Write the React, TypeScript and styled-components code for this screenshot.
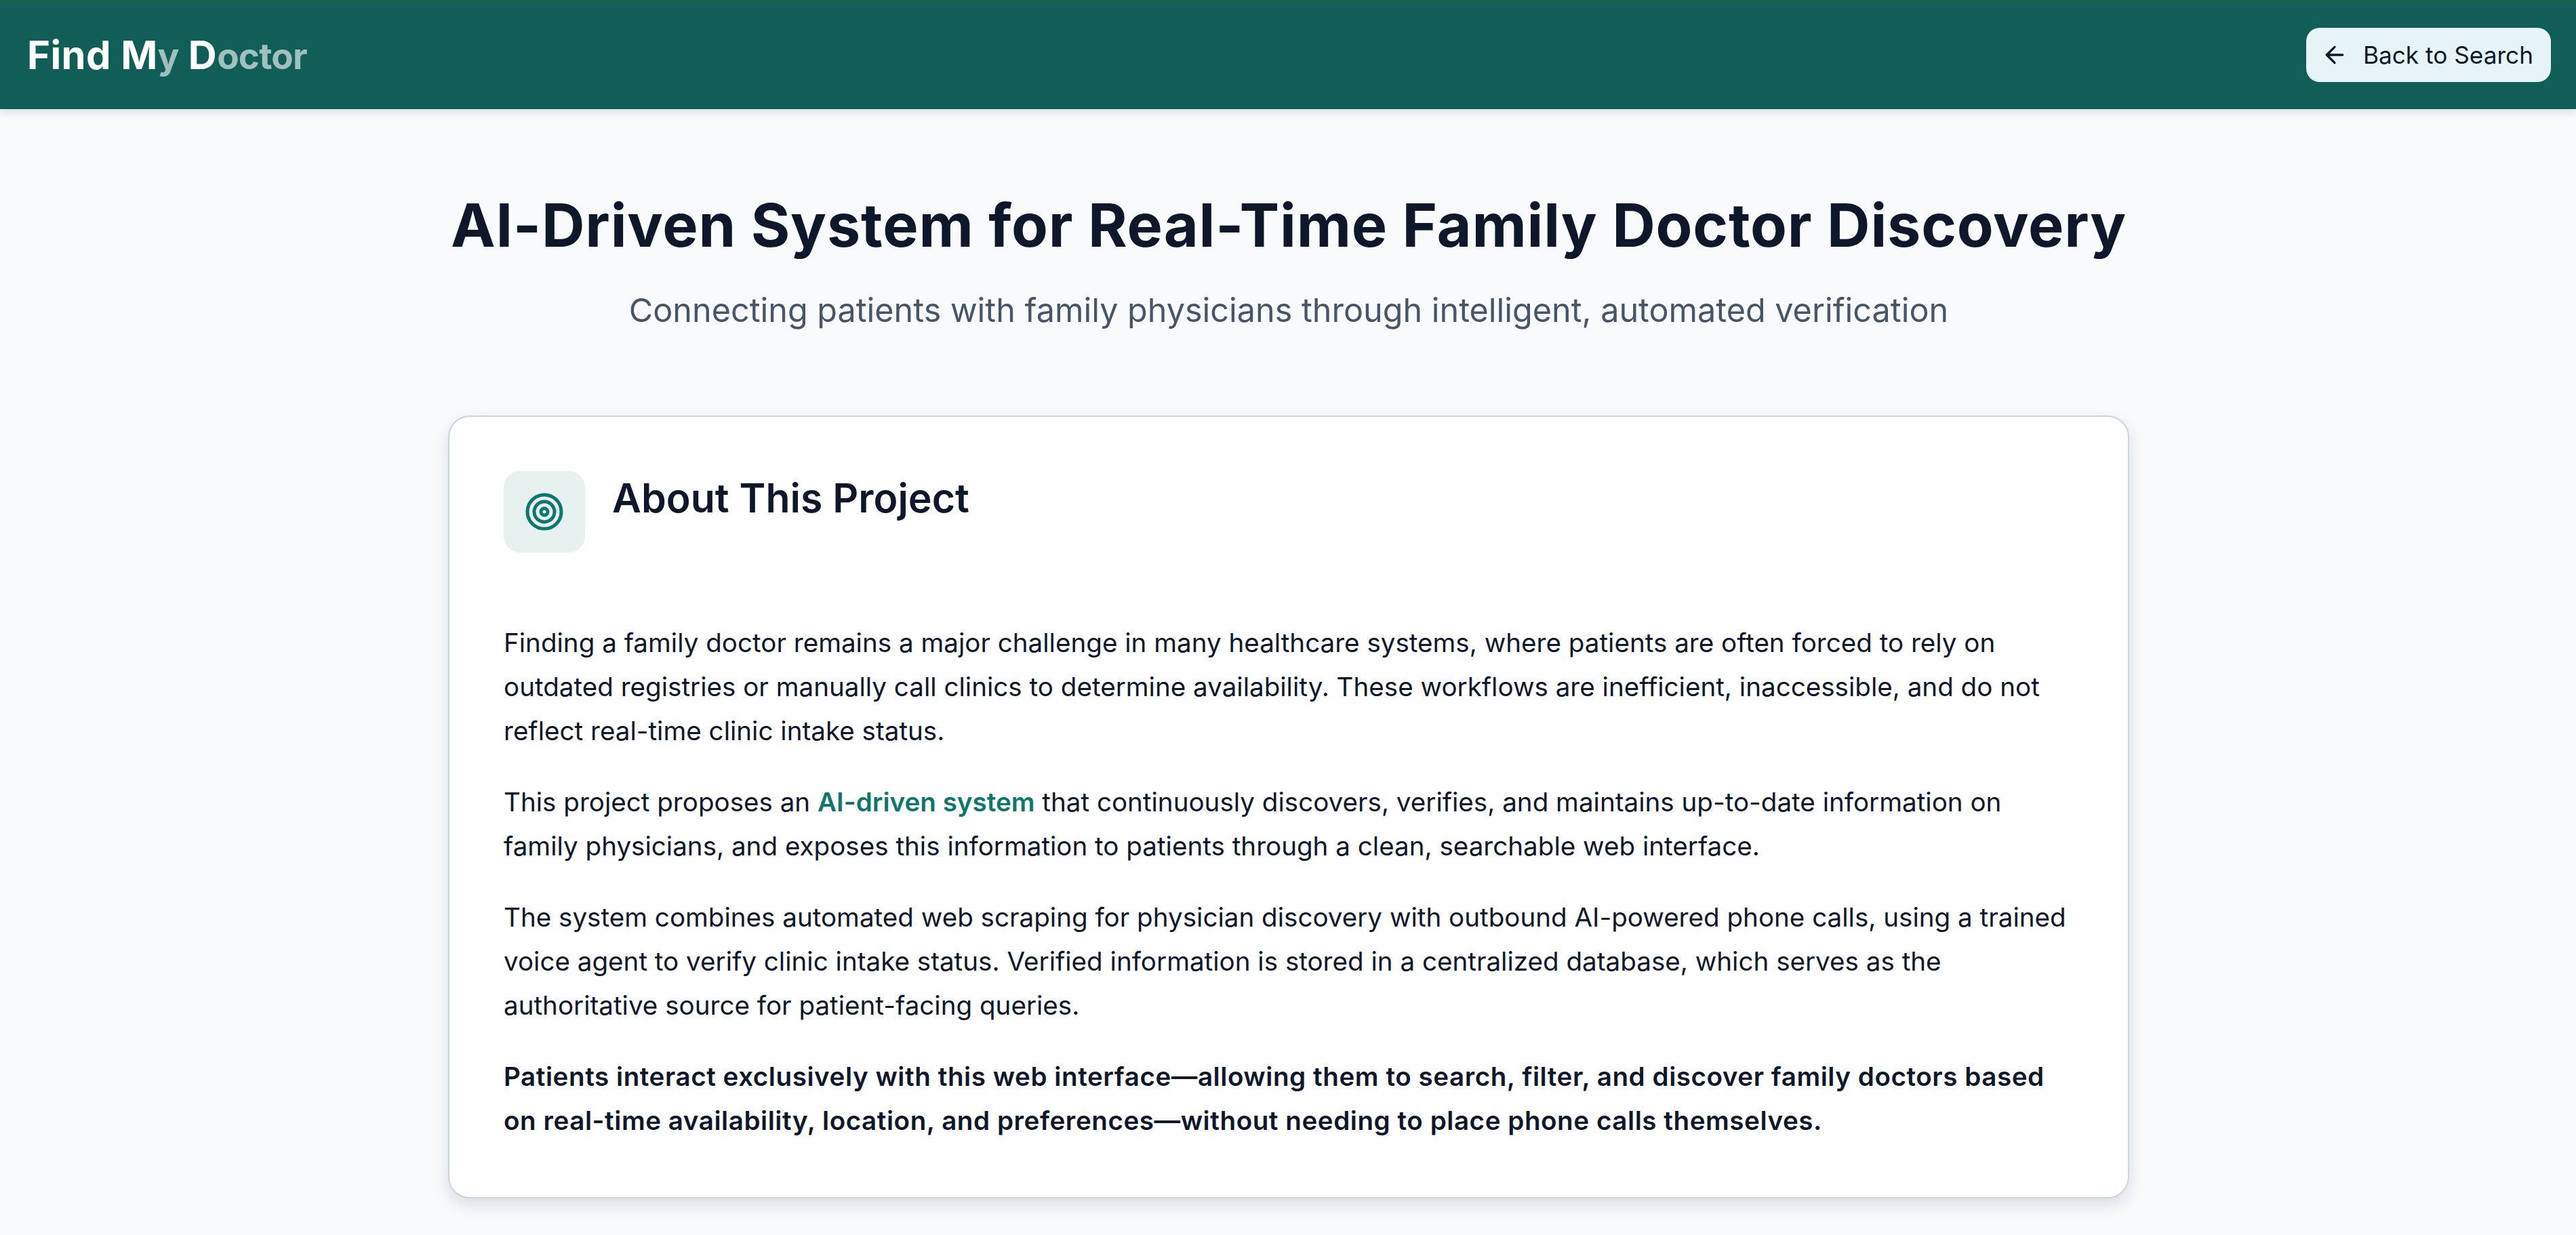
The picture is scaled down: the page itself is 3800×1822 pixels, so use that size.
import React from 'react';
import styled, { createGlobalStyle } from 'styled-components';
import { ArrowLeft, Target } from 'lucide-react';

const GlobalStyle = createGlobalStyle`
  html, body {
    margin: 0;
    padding: 0;
    background: #f8fafc;
    font-family: Inter, "Liberation Sans", sans-serif;
  }
  * {
    box-sizing: border-box;
  }
`;

const App = () => {
  return (
    <Page>
      <GlobalStyle />
      <Header>
        <Logo>
          Find M<Faded>y</Faded> D<Faded>octor</Faded>
        </Logo>
        <BackButton>
          <ArrowLeft size={40} strokeWidth={2} />
          Back to Search
        </BackButton>
      </Header>
      <Main>
        <Title>AI-Driven System for Real-Time Family Doctor Discovery</Title>
        <Subtitle>Connecting patients with family physicians through intelligent, automated verification</Subtitle>
        <Card>
          <CardHead>
            <IconBox>
              <Target size={60} strokeWidth={2} />
            </IconBox>
            <CardTitle>About This Project</CardTitle>
          </CardHead>
          <Paragraph>
            Finding a family doctor remains a major challenge in many healthcare systems, where patients are often forced to rely on outdated registries or manually call clinics to determine availability. These workflows are inefficient, inaccessible, and do not reflect real-time clinic intake status.
          </Paragraph>
          <Paragraph>
            This project proposes an <Accent>AI-driven system</Accent> that continuously discovers, verifies, and maintains up-to-date information on family physicians, and exposes this information to patients through a clean, searchable web interface.
          </Paragraph>
          <Paragraph>
            The system combines automated web scraping for physician discovery with outbound AI-powered phone calls, using a trained voice agent to verify clinic intake status. Verified information is stored in a centralized database, which serves as the authoritative source for patient-facing queries.
          </Paragraph>
          <Paragraph $strong>
            Patients interact exclusively with this web interface—allowing them to search, filter, and discover family doctors based on real-time availability, location, and preferences—without needing to place phone calls themselves.
          </Paragraph>
        </Card>
      </Main>
    </Page>
  );
};

const Page = styled.div`
  min-height: 1822px;
  background: #f8fafc;
  color: #0f172a;
`;
const Header = styled.header`
  height: 161px;
  background: #115e59;
  border-top: 1px solid #2d5a2a;
  box-shadow: 0 5px 12px rgba(15, 23, 42, 0.12);
  padding: 0 37px 0 40px;
  display: flex;
  align-items: center;
  justify-content: space-between;
`;
const Logo = styled.div`
  color: #ffffff;
  font-size: 58px;
  font-weight: 700;
  letter-spacing: 0.4px;
`;
const Faded = styled.span`
  color: #a0c0bd;
  font-size: 53px;
  letter-spacing: -0.8px;
`;
const BackButton = styled.button`
  height: 80px;
  padding: 0 26px 0 22px;
  border: none;
  border-radius: 20px;
  background: #e6f4f8;
  color: #0f172a;
  font-family: inherit;
  font-size: 35.2px;
  font-weight: 400;
  display: flex;
  align-items: center;
  gap: 22px;
`;
const Main = styled.main`
  width: 2480px;
  margin-left: 661px;
  padding-top: 111px;
`;
const Title = styled.h1`
  margin: 0;
  text-align: center;
  font-size: 88px;
  line-height: 120px;
  font-weight: 700;
  letter-spacing: 0.8px;
  white-space: nowrap;
  color: #0f172a;
`;
const Subtitle = styled.p`
  margin: 30px 0 0;
  text-align: center;
  font-size: 48.5px;
  line-height: 72px;
  font-weight: 400;
  color: #475569;
`;
const Card = styled.section`
  margin-top: 119px;
  background: #ffffff;
  border: 2px solid #cbd5e1;
  border-radius: 32px;
  box-shadow: 0 10px 24px rgba(15, 23, 42, 0.12);
  padding: 80px;
`;
const CardHead = styled.div`
  display: flex;
  align-items: flex-start;
  gap: 40px;
  margin-bottom: 101px;
`;
const IconBox = styled.div`
  width: 120px;
  height: 120px;
  border-radius: 24px;
  background: #e7f1ef;
  color: #0f766e;
  display: flex;
  align-items: center;
  justify-content: center;
`;
const CardTitle = styled.h2`
  margin: 0;
  font-size: 59px;
  line-height: 80px;
  font-weight: 600;
  color: #0f172a;
`;
const Paragraph = styled.p<{ $strong?: boolean }>`
  margin: 0 0 40px;
  font-size: 38.6px;
  line-height: 65px;
  font-weight: ${(p) => (p.$strong ? 600 : 400)};
  letter-spacing: ${(p) => (p.$strong ? '0.55px' : 'normal')};
  color: #0f172a;
  &:last-child {
    margin-bottom: 0;
  }
`;
const Accent = styled.strong`
  color: #0f766e;
  font-weight: 600;
`;

export default App;
